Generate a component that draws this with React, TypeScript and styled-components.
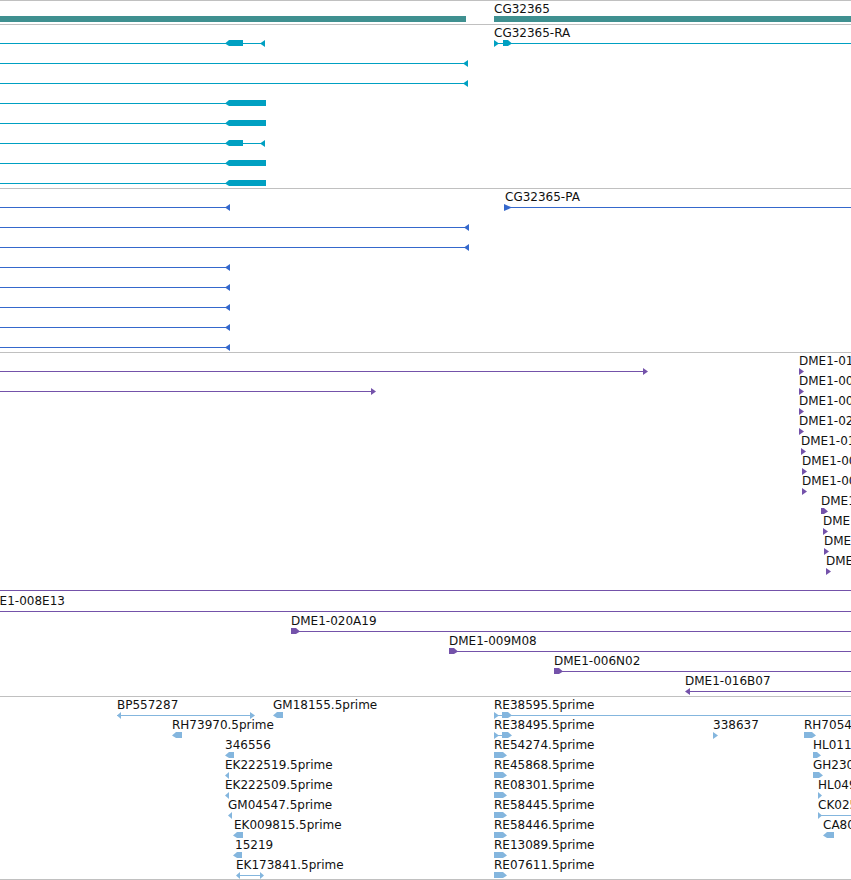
import React from "react";
import styled, { createGlobalStyle } from "styled-components";

const GlobalStyle = createGlobalStyle`
  html, body { margin: 0; padding: 0; background: #ffffff; }
  body { font-family: "DejaVu Sans", "Liberation Sans", sans-serif; }
`;

type Shape =
  | { k: "line"; x1: number; x2: number }
  | { k: "bar"; x1: number; x2: number }
  | { k: "bl"; x1: number; x2: number }
  | { k: "br"; x1: number; x2: number }
  | { k: "tl"; x: number; w?: number }
  | { k: "tr"; x: number; w?: number };

type Lbl = { x: number; t: string };
type RowData = { labels?: Lbl[]; shapes: Shape[] };
type TrackData = { h: number; color: string; rule?: string; pad?: number; rows: RowData[] };

const GRAY = "#c0c0c0";
const TEAL = "#3f9090";
const CYAN = "#00a0c2";
const BLUE = "#3568cc";
const PURPLE = "#7452aa";
const LIGHT = "#84b6de";

const W = 851;

const Page = styled.div`
  width: ${W}px;
  border-top: 1px solid ${GRAY};
  display: flex;
  flex-direction: column;
  overflow: hidden;
`;

const Track = styled.section<{ $h: number; $rule: string; $pad: number }>`
  position: relative;
  height: ${(p) => p.$h}px;
  border-bottom: 1px solid ${(p) => p.$rule};
  padding-top: ${(p) => p.$pad}px;
  box-sizing: content-box;
  display: flex;
  flex-direction: column;
  overflow: hidden;
`;

const Row = styled.div`
  position: relative;
  height: 20px;
  flex: 0 0 20px;
`;

const Label = styled.span`
  position: absolute;
  top: 1px;
  font-family: "DejaVu Sans", "Liberation Sans", sans-serif;
  font-size: 12px;
  line-height: 15px;
  color: #111;
  white-space: nowrap;
  z-index: 1;
`;

const Svg = styled.svg`
  position: absolute;
  left: 0;
  top: 0;
  overflow: visible;
  pointer-events: none;
`;

const Glyph: React.FC<{ shapes: Shape[]; color: string }> = ({ shapes, color }) => (
  <Svg width={W} height={24} viewBox={`0 0 ${W} 24`}>
    {shapes.map((s, i) => {
      switch (s.k) {
        case "line":
          return <rect key={i} x={s.x1} y={18} width={s.x2 - s.x1} height={1} fill={color} />;
        case "bar":
          return <rect key={i} x={s.x1} y={15} width={s.x2 - s.x1} height={6} fill={color} />;
        case "bl":
          return (
            <polygon
              key={i}
              fill={color}
              points={`${s.x1},18.5 ${s.x1 + 4},15 ${s.x2},15 ${s.x2},21 ${s.x1 + 4},21`}
            />
          );
        case "br":
          return (
            <polygon
              key={i}
              fill={color}
              points={`${s.x1},15 ${s.x2 - 4},15 ${s.x2},18.5 ${s.x2 - 4},21 ${s.x1},21`}
            />
          );
        case "tl": {
          const w = s.w ?? 5;
          return <polygon key={i} fill={color} points={`${s.x},18.5 ${s.x + w},15 ${s.x + w},22`} />;
        }
        case "tr": {
          const w = s.w ?? 5;
          return <polygon key={i} fill={color} points={`${s.x},15 ${s.x + w},18.5 ${s.x},22`} />;
        }
      }
      return null;
    })}
  </Svg>
);

const exonLeft = (): Shape[] => [
  { k: "line", x1: 0, x2: 262 },
  { k: "bl", x1: 225, x2: 243 },
  { k: "tl", x: 260 },
];
const longLeft = (end: number): Shape[] => [
  { k: "line", x1: 0, x2: end },
  { k: "tl", x: end - 5 },
];
const blockLeft = (): Shape[] => [
  { k: "line", x1: 0, x2: 226 },
  { k: "bl", x1: 225, x2: 266 },
];
const shortLeft = (): Shape[] => [
  { k: "line", x1: 0, x2: 230 },
  { k: "tl", x: 225 },
];
const dmeTip = (x: number, t: string): RowData => ({
  labels: [{ x, t }],
  shapes: [{ k: "tr", x }],
});
const re = (t: string): Lbl => ({ x: 494, t });
const reBlock: Shape = { k: "br", x1: 494, x2: 507 };

const tracks: TrackData[] = [
  {
    h: 23,
    color: TEAL,
    rows: [
      {
        labels: [{ x: 494, t: "CG32365" }],
        shapes: [
          { k: "bar", x1: 0, x2: 466 },
          { k: "bar", x1: 494, x2: W },
        ],
      },
    ],
  },
  {
    h: 163,
    color: CYAN,
    rows: [
      {
        labels: [{ x: 494, t: "CG32365-RA" }],
        shapes: [
          ...exonLeft(),
          { k: "line", x1: 496, x2: W },
          { k: "tr", x: 494 },
          { k: "br", x1: 503, x2: 512 },
        ],
      },
      { shapes: longLeft(468) },
      { shapes: longLeft(468) },
      { shapes: blockLeft() },
      { shapes: blockLeft() },
      { shapes: exonLeft() },
      { shapes: blockLeft() },
      { shapes: blockLeft() },
    ],
  },
  {
    h: 163,
    color: BLUE,
    rows: [
      {
        labels: [{ x: 505, t: "CG32365-PA" }],
        shapes: [...shortLeft(), { k: "line", x1: 506, x2: W }, { k: "tr", x: 504, w: 8 }],
      },
      { shapes: longLeft(469) },
      { shapes: longLeft(469) },
      { shapes: shortLeft() },
      { shapes: shortLeft() },
      { shapes: shortLeft() },
      { shapes: shortLeft() },
      { shapes: shortLeft() },
    ],
  },
  {
    h: 237,
    color: PURPLE,
    rule: PURPLE,
    rows: [
      {
        labels: [{ x: 799, t: "DME1-011F07" }],
        shapes: [
          { k: "line", x1: 0, x2: 645 },
          { k: "tr", x: 643 },
          { k: "tr", x: 799 },
        ],
      },
      {
        labels: [{ x: 799, t: "DME1-005J24" }],
        shapes: [
          { k: "line", x1: 0, x2: 373 },
          { k: "tr", x: 371 },
          { k: "tr", x: 799 },
        ],
      },
      dmeTip(799, "DME1-008A12"),
      dmeTip(799, "DME1-021C03"),
      dmeTip(801, "DME1-016H09"),
      dmeTip(802, "DME1-007M18"),
      dmeTip(802, "DME1-003K11"),
      { labels: [{ x: 821, t: "DME1-012P05" }], shapes: [{ k: "br", x1: 821, x2: 828 }] },
      dmeTip(823, "DME1-014D22"),
      dmeTip(824, "DME1-010G16"),
      dmeTip(826, "DME1-018B20"),
    ],
  },
  {
    h: 103,
    pad: 2,
    color: PURPLE,
    rows: [
      { labels: [{ x: -20, t: "DME1-008E13" }], shapes: [{ k: "line", x1: 0, x2: W }] },
      {
        labels: [{ x: 291, t: "DME1-020A19" }],
        shapes: [
          { k: "line", x1: 291, x2: W },
          { k: "br", x1: 291, x2: 300 },
        ],
      },
      {
        labels: [{ x: 449, t: "DME1-009M08" }],
        shapes: [
          { k: "line", x1: 449, x2: W },
          { k: "br", x1: 449, x2: 458 },
        ],
      },
      {
        labels: [{ x: 554, t: "DME1-006N02" }],
        shapes: [
          { k: "line", x1: 554, x2: W },
          { k: "br", x1: 554, x2: 563 },
        ],
      },
      {
        labels: [{ x: 685, t: "DME1-016B07" }],
        shapes: [
          { k: "line", x1: 687, x2: W },
          { k: "tl", x: 685 },
        ],
      },
    ],
  },
  {
    h: 182,
    color: LIGHT,
    rows: [
      {
        labels: [
          { x: 117, t: "BP557287" },
          { x: 273, t: "GM18155.5prime" },
          re("RE38595.5prime"),
        ],
        shapes: [
          { k: "line", x1: 117, x2: 252 },
          { k: "tl", x: 117, w: 4 },
          { k: "tr", x: 250 },
          { k: "bl", x1: 273, x2: 283 },
          { k: "line", x1: 496, x2: W },
          { k: "tr", x: 494 },
          { k: "br", x1: 502, x2: 512 },
        ],
      },
      {
        labels: [
          { x: 172, t: "RH73970.5prime" },
          re("RE38495.5prime"),
          { x: 713, t: "338637" },
          { x: 804, t: "RH70548.5prime" },
        ],
        shapes: [
          { k: "bl", x1: 172, x2: 182 },
          { k: "line", x1: 496, x2: 505 },
          { k: "tr", x: 494 },
          { k: "br", x1: 502, x2: 512 },
          { k: "tr", x: 713 },
          { k: "br", x1: 804, x2: 816 },
        ],
      },
      {
        labels: [{ x: 225, t: "346556" }, re("RE54274.5prime"), { x: 813, t: "HL01124.5prime" }],
        shapes: [{ k: "bl", x1: 225, x2: 234 }, reBlock, { k: "br", x1: 813, x2: 821 }],
      },
      {
        labels: [{ x: 225, t: "EK222519.5prime" }, re("RE45868.5prime"), { x: 813, t: "GH23018.5prime" }],
        shapes: [{ k: "tl", x: 225, w: 4 }, reBlock, { k: "br", x1: 813, x2: 823 }],
      },
      {
        labels: [{ x: 225, t: "EK222509.5prime" }, re("RE08301.5prime"), { x: 818, t: "HL04912.5prime" }],
        shapes: [{ k: "tl", x: 225, w: 4 }, reBlock, { k: "tr", x: 818, w: 4 }],
      },
      {
        labels: [{ x: 228, t: "GM04547.5prime" }, re("RE58445.5prime"), { x: 818, t: "CK02583.5prime" }],
        shapes: [
          { k: "tl", x: 228, w: 4 },
          reBlock,
          { k: "line", x1: 818, x2: W },
          { k: "tr", x: 818, w: 4 },
        ],
      },
      {
        labels: [{ x: 234, t: "EK009815.5prime" }, re("RE58446.5prime"), { x: 823, t: "CA80721.5prime" }],
        shapes: [{ k: "bl", x1: 233, x2: 243 }, reBlock, { k: "bl", x1: 823, x2: 834 }],
      },
      {
        labels: [{ x: 235, t: "15219" }, re("RE13089.5prime")],
        shapes: [{ k: "bl", x1: 233, x2: 242 }, reBlock],
      },
      {
        labels: [{ x: 236, t: "EK173841.5prime" }, re("RE07611.5prime")],
        shapes: [
          { k: "line", x1: 237, x2: 262 },
          { k: "tl", x: 236, w: 4 },
          { k: "tr", x: 260, w: 4 },
          reBlock,
        ],
      },
    ],
  },
];

export default function App() {
  return (
    <>
      <GlobalStyle />
      <Page>
        {tracks.map((tr, ti) => (
          <Track key={ti} $h={tr.h} $rule={tr.rule ?? GRAY} $pad={tr.pad ?? 0}>
            {tr.rows.map((r, ri) => (
              <Row key={ri}>
                <Glyph shapes={r.shapes} color={tr.color} />
                {(r.labels ?? []).map((l, li) => (
                  <Label key={li} style={{ left: l.x }}>
                    {l.t}
                  </Label>
                ))}
              </Row>
            ))}
          </Track>
        ))}
      </Page>
    </>
  );
}
